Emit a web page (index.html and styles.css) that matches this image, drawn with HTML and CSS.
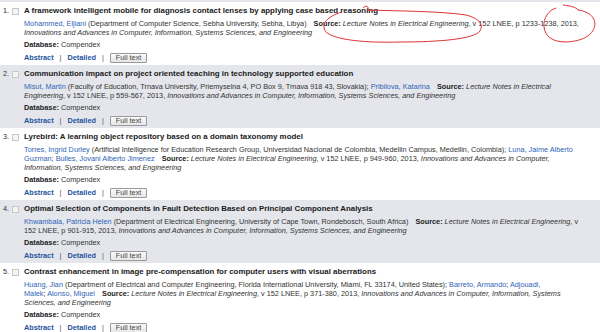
FILE: index.html
```html
<!DOCTYPE html>
<html lang="en">
<head>
    <meta charset="UTF-8">
    <title>Search results</title>
    <link rel="stylesheet" href="styles.css">
</head>
<body>
    <div class="results">
        <div class="result">
            <div class="num">1. <span class="check"></span></div>
            <div class="body">
                <div class="title">A framework intelligent mobile for diagnosis contact lenses by applying case based reasoning</div>
                <div class="cite"><a class="author">Mohammed, Eljiani</a> (Department of Computer Science, Sebha University, Sebha, Libya) <b class="src">Source:</b> <i>Lecture Notes in Electrical Engineering</i>, v 152 LNEE, p 1233-1238, 2013, <i>Innovations and Advances in Computer, Information, Systems Sciences, and Engineering</i></div>
                <div class="db"><b>Database:</b> Compendex</div>
                <div class="links"><a>Abstract</a><span class="sep">|</span><a>Detailed</a><span class="sep">|</span><span class="btn">Full text</span></div>
            </div>
        </div>
        <div class="result alt">
            <div class="num">2. <span class="check"></span></div>
            <div class="body">
                <div class="title">Communication impact on project oriented teaching in technology supported education</div>
                <div class="cite"><a class="author">Misut, Martin</a> (Faculty of Education, Trnava University, Priemyselna 4, PO Box 9, Trnava 918 43, Slovakia); <a class="author">Pribilova, Katarina</a> <b class="src">Source:</b> <i>Lecture Notes in Electrical Engineering</i>, v 152 LNEE, p 559-567, 2013, <i>Innovations and Advances in Computer, Information, Systems Sciences, and Engineering</i></div>
                <div class="db"><b>Database:</b> Compendex</div>
                <div class="links"><a>Abstract</a><span class="sep">|</span><a>Detailed</a><span class="sep">|</span><span class="btn">Full text</span></div>
            </div>
        </div>
        <div class="result">
            <div class="num">3. <span class="check"></span></div>
            <div class="body">
                <div class="title">Lyrebird: A learning object repository based on a domain taxonomy model</div>
                <div class="cite"><a class="author">Torres, Ingrid Durley</a> (Artificial Intelligence for Education Research Group, Universidad Nacional de Colombia, Medellin Campus, Medellin, Colombia); <a class="author">Luna, Jaime Alberto Guzman</a>; <a class="author">Bulles, Jovani Alberto Jimenez</a> <b class="src">Source:</b> <i>Lecture Notes in Electrical Engineering</i>, v 152 LNEE, p 949-960, 2013, <i>Innovations and Advances in Computer, Information, Systems Sciences, and Engineering</i></div>
                <div class="db"><b>Database:</b> Compendex</div>
                <div class="links"><a>Abstract</a><span class="sep">|</span><a>Detailed</a><span class="sep">|</span><span class="btn">Full text</span></div>
            </div>
        </div>
        <div class="result alt">
            <div class="num">4. <span class="check"></span></div>
            <div class="body">
                <div class="title">Optimal Selection of Components in Fault Detection Based on Principal Component Analysis</div>
                <div class="cite"><a class="author">Khwambala, Patricia Helen</a> (Department of Electrical Engineering, University of Cape Town, Rondebosch, South Africa) <b class="src">Source:</b> <i>Lecture Notes in Electrical Engineering</i>, v 152 LNEE, p 901-915, 2013, <i>Innovations and Advances in Computer, Information, Systems Sciences, and Engineering</i></div>
                <div class="db"><b>Database:</b> Compendex</div>
                <div class="links"><a>Abstract</a><span class="sep">|</span><a>Detailed</a><span class="sep">|</span><span class="btn">Full text</span></div>
            </div>
        </div>
        <div class="result">
            <div class="num">5. <span class="check"></span></div>
            <div class="body">
                <div class="title">Contrast enhancement in image pre-compensation for computer users with visual aberrations</div>
                <div class="cite"><a class="author">Huang, Jian</a> (Department of Electrical and Computer Engineering, Florida International University, Miami, FL 33174, United States); <a class="author">Barreto, Armando</a>; <a class="author">Adjouadi,<br>Malek</a>; <a class="author">Alonso, Miguel</a> <b class="src">Source:</b> <i>Lecture Notes in Electrical Engineering</i>, v 152 LNEE, p 371-380, 2013, <i>Innovations and Advances in Computer, Information, Systems Sciences, and Engineering</i></div>
                <div class="db"><b>Database:</b> Compendex</div>
                <div class="links"><a>Abstract</a><span class="sep">|</span><a>Detailed</a><span class="sep">|</span><span class="btn">Full text</span></div>
            </div>
        </div>
    </div>

    <!-- hand-drawn red marks on the screenshot -->
    <svg class="marks" width="600" height="60" viewBox="0 0 600 60">
        <path d="M363 8 C366 5 369 6 368 10 C395 11 440 11 466 15 C478 18 484 24 480 31 C474 39 440 42 400 42 C365 43 335 40 326 32 C320 24 328 16 342 12" />
        <path d="M563 5 C570 6 576 7 578 10 C588 11 595 17 595 24 C594 34 585 41 566 42 C552 42 545 36 544 27 C543 18 549 10 556 8" />
    </svg>
</body>
</html>
```

FILE: styles.css
```css
body {
    margin: 0;
    font-family: 'Liberation Sans', Arial, sans-serif;
    font-size: 7.3px;
    color: #333;
    background-color: white;
}
.results {
    border-top: 2px solid #e4e6eb;
}
.result {
    display: flex;
    padding: 4px 0 2px 0;
}
.result.alt {
    background-color: #e4e6eb;
}
.num {
    width: 24px;
    flex-shrink: 0;
    display: flex;
    align-items: flex-start;
    gap: 3px;
    padding-left: 3px;
    box-sizing: border-box;
    line-height: 10px;
    color: #333;
}
.check {
    display: inline-block;
    width: 5px;
    height: 5px;
    margin-top: 2px;
    border: 1px solid #c8c8c8;
    background: #f4f4f4;
}
.body {
    width: 558px;
}
.title {
    font-size: 7.9px;
    font-weight: bold;
    color: #1a1a1a;
    line-height: 10px;
    margin-bottom: 3px;
}
.cite {
    line-height: 9px;
}
.src {
    margin-left: 5px;
    color: #222;
}
.author {
    color: #2f64b8;
}
.db {
    margin-top: 3px;
    line-height: 10px;
}
.db b {
    color: #222;
}
.links {
    margin-top: 3px;
    line-height: 10px;
    display: flex;
    align-items: center;
}
.links a {
    color: #24539e;
    font-weight: bold;
}
.sep {
    margin: 0 6px;
    color: #555;
}
.btn {
    display: inline-block;
    border: 1px solid #9a9a9a;
    background: linear-gradient(#fafafa, #e6e6e6);
    color: #444;
    padding: 0 5px;
    line-height: 8px;
    border-radius: 1px;
}
.marks {
    position: absolute;
    top: 0;
    left: 0;
    pointer-events: none;
}
.marks path {
    fill: none;
    stroke: #e03434;
    stroke-width: 1;
}
```
